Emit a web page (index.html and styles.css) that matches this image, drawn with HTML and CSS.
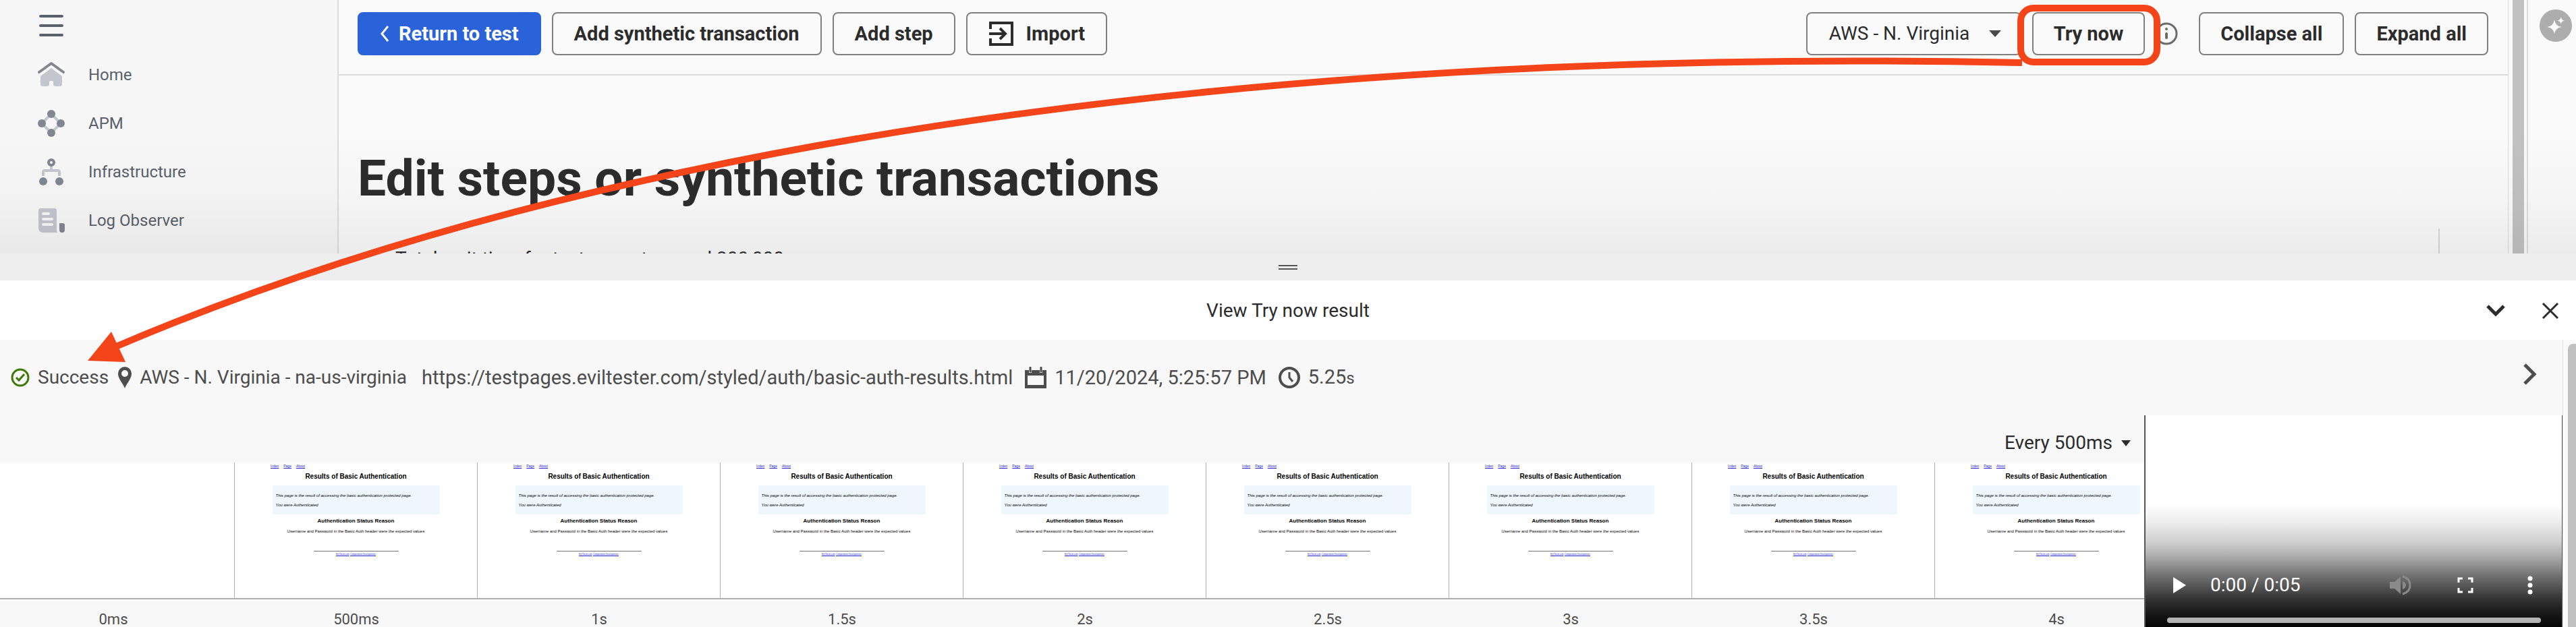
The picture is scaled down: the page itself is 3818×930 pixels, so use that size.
FILE: index.html
```html
<!DOCTYPE html>
<html lang="en">
<head>
<meta charset="utf-8">
<title>Edit steps or synthetic transactions</title>
<link rel="stylesheet" href="styles.css">
<script src="frames.js" defer></script>
</head>
<body>
<div class="app">
  <div class="page">
    <nav class="sidebar" aria-label="Main">
      <button class="icon-button menu-button" aria-label="Menu">
        <svg width="36" height="32" viewBox="0 0 36 32" fill="none" stroke="#59616b" stroke-width="4" stroke-linecap="round"><path d="M2 2H34M2 16H34M2 30H34"/></svg>
      </button>
      <a class="nav-link" href="#">
        <svg class="nav-icon" viewBox="0 0 42 42"><path d="M21 11L37 23V35q0 3-3 3h-7q-3 0-3-3v-4q0-1-3-1t-3 1v4q0 3-3 3H8q-3 0-3-3V23Z" fill="#c3c6ce"/><path d="M3 17L21 4L39 17" fill="none" stroke="#818790" stroke-width="4" stroke-linecap="round" stroke-linejoin="round"/></svg>
        Home</a>
      <a class="nav-link" href="#">
        <svg class="nav-icon" viewBox="0 0 42 42"><path d="M21 7L35 21L21 35L7 21Z" fill="none" stroke="#c3c6ce" stroke-width="4" stroke-dasharray="14 6"/><g fill="#818790"><circle cx="21" cy="7" r="6"/><circle cx="7" cy="21" r="6"/><circle cx="35" cy="21" r="6"/><circle cx="21" cy="35" r="6"/></g></svg>
        APM</a>
      <a class="nav-link" href="#">
        <svg class="nav-icon" viewBox="0 0 42 42"><path d="M21 12V18M9 27V21q0-2 2-2H31q2 0 2 2V27" fill="none" stroke="#c3c6ce" stroke-width="4"/><circle cx="21" cy="7" r="4" fill="none" stroke="#818790" stroke-width="4"/><g fill="#818790"><circle cx="9" cy="35" r="6"/><circle cx="33" cy="35" r="6"/></g></svg>
        Infrastructure</a>
      <a class="nav-link" href="#">
        <svg class="nav-icon" viewBox="0 0 42 42"><path d="M5 3H26q3 0 3 3V36q0 3 2 3H9q-7 0-7-7V6q0-3 3-3Z" fill="#c3c6ce"/><path d="M33 25h5q3 0 3 3v7q0 4-4 4t-4-4Z" fill="#818790"/><path d="M9 11H17M9 19H22M9 27H22" stroke="#f7f7f7" stroke-width="4" stroke-linecap="round"/></svg>
        Log Observer</a>
    </nav>
    <main class="main">
      <header class="toolbar">
        <button class="btn btn-primary"><svg width="14" height="24" viewBox="0 0 14 24" fill="none" stroke="#fff" stroke-width="3"><path d="M12 1L3 12L12 23"/></svg>Return to test</button>
        <button class="btn">Add synthetic transaction</button>
        <button class="btn">Add step</button>
        <button class="btn"><svg width="38" height="38" viewBox="0 0 38 38" fill="none" stroke="#2c2c2c" stroke-width="4"><path d="M3 12V3H35V35H3V26M1 19H24M17 11L25 19L17 27"/></svg>Import</button>
        <div class="toolbar-right">
          <div class="select-wrap">
            <select class="select" aria-label="Location"><option>AWS - N. Virginia</option></select>
            <svg class="select-caret" width="18" height="10" viewBox="0 0 18 10"><path d="M0 0H18L9 10Z" fill="#4a4a4a"/></svg>
          </div>
          <button class="btn">Try now</button>
          <svg class="info" width="34" height="34" viewBox="0 0 34 34"><circle cx="17" cy="17" r="15" fill="none" stroke="#6b6b6b" stroke-width="3"/><path d="M17 17V23" stroke="#6b6b6b" stroke-width="4" stroke-linecap="round"/><circle cx="17" cy="10" r="2" fill="#6b6b6b"/></svg>
          <button class="btn">Collapse all</button>
          <button class="btn">Expand all</button>
        </div>
      </header>
      <div class="content">
        <h1 class="heading">Edit steps or synthetic transactions</h1>
        <div class="note"><span class="note-dot"></span>Total wait time for test cannot exceed 200,000</div>
      </div>
    </main>
    <div class="page-scroll"><div class="page-thumb"></div></div>
    <aside class="assist">
      <button class="icon-button" aria-label="Assistant"><svg width="48" height="48" viewBox="0 0 48 48"><circle cx="24" cy="24" r="24" fill="#adadad"/><path d="M22 15Q23 25 33 26Q23 27 22 37Q21 27 11 26Q21 25 22 15ZM32 11Q32 16 37 16.500Q32 17 32 22Q31 17 26 16.500Q31 16 32 11Z" fill="#fff"/></svg></button>
    </aside>
    <div class="page-shade"></div>
  </div>

  <div class="handle"><span class="grip"></span></div>

  <section class="result-head">
    <h2 class="result-title">View Try now result</h2>
    <div class="result-actions">
      <button class="icon-button" aria-label="Collapse"><svg width="30" height="20" viewBox="0 0 30 20" fill="none" stroke="#2c2c2c" stroke-width="5"><path d="M3 3L15 15L27 3"/></svg></button>
      <button class="icon-button" aria-label="Close"><svg width="26" height="26" viewBox="0 0 26 26" fill="none" stroke="#2c2c2c" stroke-width="3"><path d="M2 2L24 24M24 2L2 24"/></svg></button>
    </div>
  </section>

  <section class="result-body">
    <div class="result-main">
      <div class="status">
        <span class="status-item"><svg width="28" height="28" viewBox="0 0 28 28" fill="none" stroke="#407a06" stroke-width="3"><circle cx="14" cy="14" r="12"/><path d="M8 14L12 18L20 9"/></svg>Success</span>
        <span class="status-item"><svg width="20" height="32" viewBox="0 0 20 32"><path d="M10 0a10 10 0 0 1 10 10c0 8-7 14-10 22C7 24 0 18 0 10A10 10 0 0 1 10 0Zm0 5a5 5 0 1 0 0 10a5 5 0 0 0 0-10Z" fill="#4d4d4d"/></svg>AWS - N. Virginia - na-us-virginia</span>
        <span class="status-item status-url">https://testpages.eviltester.com/styled/auth/basic-auth-results.html</span>
        <span class="status-item status-date"><svg width="32" height="32" viewBox="0 0 32 32"><path d="M0 5H6V9H10V5H22V9H26V5H32V32H0ZM4 13V27H28V13Z" fill="#4d4d4d" fill-rule="evenodd"/><path d="M8 1V7M24 1V7" stroke="#4d4d4d" stroke-width="3" stroke-linecap="round"/></svg>11/20/2024, 5:25:57 PM</span>
        <span class="status-item status-date"><svg width="32" height="32" viewBox="0 0 32 32" fill="none" stroke="#4d4d4d"><circle cx="16" cy="16" r="14" stroke-width="4"/><path d="M16 8V16L21 22" stroke-width="3"/></svg><span>5.25<small class="unit">s</small></span></span>
        <button class="icon-button status-next" aria-label="Next"><svg width="20" height="32" viewBox="0 0 20 32" fill="none" stroke="#4d4d4d" stroke-width="5"><path d="M2 2L16 16L2 30"/></svg></button>
      </div>
      <div class="media">
        <div class="timeline">
          <div class="interval"><button class="interval-button">Every 500ms<svg width="14" height="9" viewBox="0 0 14 9"><path d="M0 0H14L7 9Z" fill="#2c2c2c"/></svg></button></div>
          <div class="frames" id="frames"></div>
        </div>
        <div class="video">
          <div class="controls">
            <button class="icon-button" aria-label="Play"><svg width="20" height="24" viewBox="0 0 20 24"><path d="M0 0L19 12L0 24Z" fill="#fff"/></svg></button>
            <span class="time">0:00 / 0:05</span>
            <button class="icon-button mute" aria-label="Mute"><svg width="32" height="30" viewBox="0 0 32 30"><path d="M0 10H7L16 2V28L7 20H0ZM19 9Q24 11 24 15T19 21Z" fill="#8a8a8a"/><path d="M19 2Q30 5 30 15T19 28" fill="none" stroke="#8a8a8a" stroke-width="3"/></svg></button>
            <button class="icon-button full" aria-label="Full screen"><svg width="24" height="24" viewBox="0 0 24 24" fill="none" stroke="#fff" stroke-width="3"><path d="M2 8V2H8M16 2H22V8M22 16V22H16M8 22H2V16"/></svg></button>
            <button class="icon-button" aria-label="More"><svg width="8" height="28" viewBox="0 0 8 28" fill="#fff"><circle cx="4" cy="4" r="3.500"/><circle cx="4" cy="14" r="3.500"/><circle cx="4" cy="24" r="3.500"/></svg></button>
          </div>
          <div class="progress"></div>
        </div>
      </div>
    </div>
    <div class="result-scroll"><div class="result-thumb"></div></div>
  </section>

  <svg class="callout" viewBox="0 0 3818 930" preserveAspectRatio="none">
    <rect x="2995" y="12" width="202" height="80" rx="19" fill="none" stroke="#f4451a" stroke-width="10"/>
    <path d="M2997 93C2000 72 960 178 172 514" fill="none" stroke="#f4451a" stroke-width="10"/>
    <path d="M130 535L165 492L186 537Z" fill="#f4451a"/>
  </svg>
</div>
</body>
</html>
```
FILE: styles.css
```css
* { box-sizing: border-box; }
body { margin: 0; font-family: Roboto, "Liberation Sans", sans-serif; font-size: 28px; line-height: 32px; color: #2c2c2c; background: #f8f8f8; }
button { font: inherit; color: inherit; cursor: pointer; }
svg { display: block; flex: none; }

.app { position: relative; display: flex; flex-direction: column; height: 100vh; overflow: hidden; }
.icon-button { padding: 0; border: 0; background: none; }

.page { position: relative; display: flex; height: 376px; flex: none; overflow: hidden; background: #fafafa; }
.page-shade { position: absolute; inset: 0; pointer-events: none; background: linear-gradient(transparent 50%, rgba(0, 0, 0, .02) 78%, rgba(0, 0, 0, .06)); }
.sidebar { width: 502px; flex: none; padding: 22px 0 0 55px; border-right: 2px solid #dcdcdc; background: #f7f7f7; }
.menu-button { display: block; margin: 0 0 21px 3px; }
.nav-link { display: flex; align-items: center; gap: 34px; height: 72px; font-size: 24px; color: #59616b; text-decoration: none; }
.nav-icon { width: 42px; height: 42px; }

.main { flex: 1; min-width: 0; }
.toolbar { display: flex; align-items: center; gap: 16px; height: 112px; padding: 0 29px 10px 28px; border-bottom: 2px solid #dcdcdc; }
.toolbar-right { display: flex; align-items: center; gap: 16px; margin-left: auto; }
.btn { display: flex; align-items: center; gap: 18px; height: 64px; padding: 0 31px; border: 2px solid #808080; border-radius: 8px; background: transparent; font-weight: 700; font-size: 29px; white-space: nowrap; }
.btn-primary { gap: 14px; border-color: #2a62d9; background: #2a62d9; color: #fff; }
.toolbar-right .btn { padding: 0 30px; }
.select-wrap { position: relative; }
.select { width: 319px; height: 64px; padding: 0 32px; border: 2px solid #808080; border-radius: 8px; background: transparent; appearance: none; font: inherit; color: inherit; }
.select-caret { position: absolute; right: 30px; top: 27px; pointer-events: none; }
.info { margin: 0 15px 0 -1px; }

.content { padding: 108px 101px 0 28px; }
.heading { margin: 0; font-size: 75px; line-height: 88px; font-weight: 700; }
.note { display: flex; align-items: center; gap: 18px; height: 90px; margin-top: 31px; padding-left: 10px; border-right: 2px solid #d8d8d8; }
.note-dot { width: 28px; height: 28px; border-radius: 50%; background: #666; }

.page-scroll { width: 30px; flex: none; padding: 0 6px; border: solid #dcdcdc; border-width: 0 2px 0 1px; }
.page-thumb { height: 100%; width: 17px; background: #c1c1c1; }
.assist { width: 71px; flex: none; padding: 14px 0 0 17px; }

.handle { display: flex; align-items: center; justify-content: center; height: 40px; flex: none; background: #eee; }
.grip { width: 28px; height: 7px; border: solid #555; border-width: 2px 0; }

.result-head { display: flex; align-items: center; position: relative; height: 88px; flex: none; padding-top: 2px; background: #fff; }
.result-title { flex: 1; margin: 0; text-align: center; font-size: 28px; font-weight: 400; }
.result-actions { position: absolute; right: 25px; display: flex; align-items: center; gap: 53px; }

.result-body { display: flex; flex: 1; min-height: 0; }
.result-main { display: flex; flex-direction: column; flex: 1; min-width: 0; }
.result-scroll { width: 20px; flex: none; padding: 6px 0 0 7px; border-left: 1px solid #e0e0e0; background: #fafafa; }
.result-thumb { height: 100%; border-radius: 8px 0 0 0; background: #c1c1c1; }

.status { display: flex; align-items: center; gap: 14px; height: 112px; padding: 0 38px 0 16px; color: #4d4d4d; }
.status-item { display: flex; align-items: center; gap: 12px; white-space: nowrap; }
.status-url, .status-date { margin-left: 8px; font-size: 29px; }
.status-date { margin-left: 4px; }
.unit { font-size: 24px; }
.status-next { margin: 0 0 10px auto; }

.media { display: flex; flex: 1; min-height: 0; }
.timeline { flex: 1; min-width: 0; overflow: hidden; }
.interval { display: flex; justify-content: flex-end; align-items: center; height: 70px; padding: 12px 20px 0 0; }
.interval-button { display: flex; align-items: center; gap: 13px; padding: 0; border: 0; background: none; }
.frames { display: flex; margin-left: -12px; }
.frame { width: 360px; flex: none; }
.shot { height: 203px; border: solid #b0b0b0; border-width: 0 1px 2px 0; background: #fff; font-family: "Liberation Sans", Arial, sans-serif; color: #000; text-align: center; overflow: hidden; }
.shot-nav { display: flex; gap: 7px; padding: 1px 0 1px 53px; font-size: 5px; line-height: 8px; }
.shot a { color: #22c; }
.shot-title { margin: 4px 0 6px; font-size: 10px; line-height: 14px; font-weight: 700; }
.shot-box { width: 248px; margin: 0 auto; padding: 8px 5px; background: #eef6fe; font-size: 6px; line-height: 14px; font-style: italic; text-align: left; height: 43px; }
.shot-box p, .shot-text { margin: 0; }
.shot-sub { margin: 4px 0; font-size: 8px; line-height: 12px; font-weight: 700; }
.shot-text { font-size: 6px; line-height: 10px; }
.shot-rule { width: 126px; margin: 24px auto 2px; border-top: 1px solid #777; }
.shot-foot { font-size: 3px; line-height: 5px; }
.frame-time { padding-top: 14px; text-align: center; font-size: 22px; color: #4d4d4d; }

.video { display: flex; flex-direction: column; justify-content: flex-end; width: 620px; flex: none; padding: 0 31px 6px 32px; border: solid #55565a; border-width: 0 1px 0 2px; background: linear-gradient(#fff 42%, #eee 50%, #cfcfcf 60%, #b0b0b0 66%, #707070 76%, #333 87%, #1a1a1a 93%, #050505); }
.controls { display: flex; align-items: center; margin: 0 12px 32px 9px; color: #fff; }
.time { margin: 0 auto 0 35px; }
.mute { margin-right: 68px; }
.full { margin-right: 80px; }
.progress { height: 8px; border-radius: 4px; background: #b4b4b4; }

.callout { position: absolute; inset: 0; width: 100%; height: 100%; pointer-events: none; }
```
FILE: frames.js
```js
const times = ["0ms", "500ms", "1s", "1.5s", "2s", "2.5s", "3s", "3.5s", "4s"];
const shot = `
  <div class="shot-nav"><a href="#">Index</a><a href="#">Page</a><a href="#">About</a></div>
  <div class="shot-title">Results of Basic Authentication</div>
  <div class="shot-box"><p>This page is the result of accessing the basic authentication protected page.</p><p>You were Authenticated</p></div>
  <div class="shot-sub">Authentication Status Reason</div>
  <p class="shot-text">Username and Password in the Basic Auth header were the expected values</p>
  <div class="shot-rule"></div>
  <div class="shot-foot"><a href="#">EvilTester.com</a>, <a href="#">Compendium Developments</a></div>`;
document.getElementById("frames").innerHTML = times
  .map((t, i) => `<div class="frame"><div class="shot">${i ? shot : ""}</div><div class="frame-time">${t}</div></div>`)
  .join("");
```
